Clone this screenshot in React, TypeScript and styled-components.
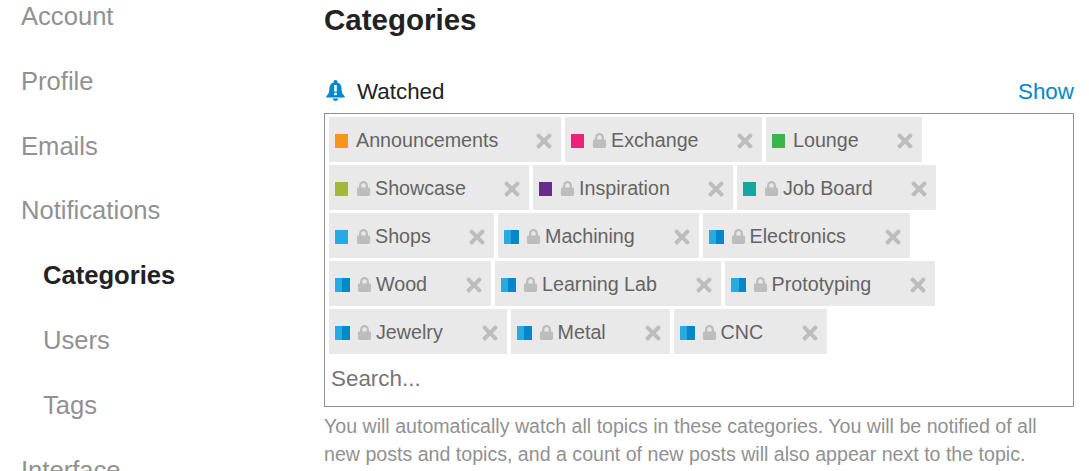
import styled, { createGlobalStyle } from 'styled-components';
import { FaLock, FaTimes } from 'react-icons/fa';

const GlobalStyle = createGlobalStyle`
    html, body {
        margin: 0;
        height: 471px;
        overflow: hidden;
        background: #fff;
    }

    body {
        font-family: "Liberation Sans", Arial, sans-serif;
    }
`;

const Page = styled.div`
    display: flex;
    width: 1089px;
    height: 471px;
    overflow: hidden;
`;

const Sidebar = styled.nav`
    width: 324px;
    flex-shrink: 0;
    padding: 0 0 0 21px;
    box-sizing: border-box;
`;

const NavItem = styled.div<{ $sub?: boolean; $active?: boolean }>`
    height: 64.8px;
    line-height: 32.2px;
    margin-left: ${({ $sub }) => ($sub ? '22px' : '0')};
    color: ${({ $active }) => ($active ? '#222222' : '#919191')};
    font-size: 25.6px;
    font-weight: ${({ $active }) => ($active ? 700 : 400)};
`;

const Main = styled.main`
    width: 750px;
    flex-shrink: 0;
`;

const Title = styled.h1`
    margin: 0;
    height: 74px;
    line-height: 40px;
    color: #222222;
    font-size: 29.5px;
    font-weight: 700;
`;

const LabelRow = styled.div`
    display: flex;
    justify-content: space-between;
    align-items: center;
    height: 35px;
    margin-bottom: 4px;
`;

const Label = styled.div`
    display: flex;
    align-items: center;
    gap: 12px;
    padding-left: 2px;
    color: #222222;
    font-size: 22.4px;
`;

const BellIcon = styled.svg`
    display: block;
    width: 19px;
    height: 21px;
    margin-bottom: 2px;
`;

const ShowLink = styled.a`
    color: #0088cc;
    font-size: 22.4px;
`;

const ChooserBox = styled.div`
    box-sizing: border-box;
    height: 294px;
    padding: 3px 4px;
    border: 1px solid #919191;
`;

const TagList = styled.div`
    display: flex;
    flex-wrap: wrap;
    row-gap: 3px;
`;

const Tag = styled.div<{ $width: number }>`
    display: flex;
    align-items: center;
    width: ${({ $width }) => $width}px;
    height: 45px;
    margin-right: 4px;
    padding: 2px 6px 0 6px;
    box-sizing: border-box;
    background: #e9e9e9;
    color: #646464;
    font-size: 19.7px;
`;

const Swatch = styled.span<{ $left: string; $right?: string }>`
    flex-shrink: 0;
    display: block;
    width: ${({ $right }) => ($right ? '15px' : '13px')};
    height: 14px;
    margin-right: ${({ $right }) => ($right ? '7px' : '8px')};
    background: ${({ $left, $right }) =>
        $right
            ? `linear-gradient(90deg, ${$left} 50%, ${$right} 50%)`
            : $left};
`;

const LockIcon = styled(FaLock)`
    flex-shrink: 0;
    margin-right: 4px;
    color: #bdbdbd;
    font-size: 15px;
`;

const TagName = styled.span`
    flex: 1;
    white-space: nowrap;
`;

const CloseIcon = styled(FaTimes)`
    flex-shrink: 0;
    color: #bdbdbd;
    font-size: 22px;
`;

const SearchText = styled.div`
    height: 48px;
    padding: 1px 0 0 2px;
    line-height: 48px;
    color: #757575;
    font-size: 22.4px;
`;

const HelpText = styled.p`
    margin: 5px 0 0;
    color: #919191;
    font-size: 19.6px;
    line-height: 28px;
`;

const blue = ['#25aae1', '#0088cc'];

const tags = [
    { name: 'Announcements', width: 232, left: '#f7941d' },
    { name: 'Exchange', width: 197, left: '#ed207b', locked: true },
    { name: 'Lounge', width: 156, left: '#3ab54a' },
    { name: 'Showcase', width: 200, left: '#a1b838', locked: true },
    { name: 'Inspiration', width: 200, left: '#652d90', locked: true },
    { name: 'Job Board', width: 199, left: '#12a89d', locked: true },
    { name: 'Shops', width: 165, left: '#25aae1', locked: true },
    { name: 'Machining', width: 200.6, left: blue[0], right: blue[1], locked: true },
    { name: 'Electronics', width: 207, left: blue[0], right: blue[1], locked: true },
    { name: 'Wood', width: 162, left: blue[0], right: blue[1], locked: true },
    { name: 'Learning Lab', width: 225.6, left: blue[0], right: blue[1], locked: true },
    { name: 'Prototyping', width: 210, left: blue[0], right: blue[1], locked: true },
    { name: 'Jewelry', width: 177.6, left: blue[0], right: blue[1], locked: true },
    { name: 'Metal', width: 159, left: blue[0], right: blue[1], locked: true },
    { name: 'CNC', width: 153, left: blue[0], right: blue[1], locked: true },
];

function App() {
    return (
        <Page>
            <GlobalStyle />

            <Sidebar>
                <NavItem>Account</NavItem>
                <NavItem>Profile</NavItem>
                <NavItem>Emails</NavItem>
                <NavItem>Notifications</NavItem>
                <NavItem $sub $active>Categories</NavItem>
                <NavItem $sub>Users</NavItem>
                <NavItem $sub>Tags</NavItem>
                <NavItem>Interface</NavItem>
            </Sidebar>

            <Main>
                <Title>Categories</Title>

                <LabelRow>
                    <Label>
                        <BellIcon viewBox="0 0 19 21">
                            <path
                                d="M9.5 0C8.4 0 7.6 .8 7.6 1.8V2.4C4.8 3.2 3.4 5.4 3.4 8.4C3.4 12.6 2.4 14 .3 16.2V17.6H18.7V16.2C16.6 14 15.6 12.6 15.6 8.4C15.6 5.4 14.2 3.2 11.4 2.4V1.8C11.4 .8 10.6 0 9.5 0ZM6.8 18.6C6.8 20 8 21 9.5 21C11 21 12.2 20 12.2 18.6Z"
                                fill="#0088cc"
                            />
                            <rect x="8.2" y="5" width="2.6" height="6.6" fill="#ffffff" />
                            <rect x="8.2" y="12.8" width="2.6" height="2.4" fill="#ffffff" />
                        </BellIcon>
                        Watched
                    </Label>
                    <ShowLink>Show</ShowLink>
                </LabelRow>

                <ChooserBox>
                    <TagList>
                        {tags.map((tag) => (
                            <Tag key={tag.name} $width={tag.width}>
                                <Swatch $left={tag.left} $right={tag.right} />
                                {tag.locked && <LockIcon />}
                                <TagName>{tag.name}</TagName>
                                <CloseIcon />
                            </Tag>
                        ))}
                    </TagList>
                    <SearchText>Search...</SearchText>
                </ChooserBox>

                <HelpText>
                    You will automatically watch all topics in these categories. You will be notified of all
                    new posts and topics, and a count of new posts will also appear next to the topic.
                </HelpText>
            </Main>
        </Page>
    );
}

export default App;
